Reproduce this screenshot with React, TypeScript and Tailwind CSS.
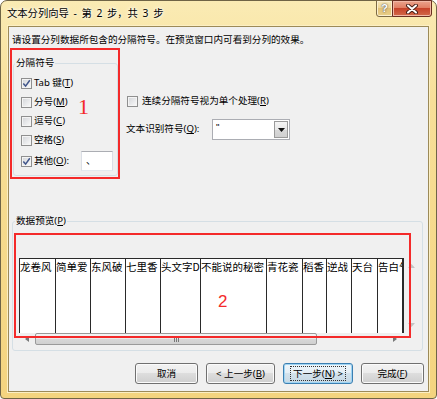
import React from 'react';

type Col = { t: string; w: string };

const cols: Col[] = [
  { t: '龙卷风', w: 'w-[36px]' },
  { t: '简单爱', w: 'w-[35px]' },
  { t: '东风破', w: 'w-[35px]' },
  { t: '七里香', w: 'w-[35px]' },
  { t: '头文字D', w: 'w-[40px]' },
  { t: '不能说的秘密', w: 'w-[66px]' },
  { t: '青花瓷', w: 'w-[36px]' },
  { t: '稻香', w: 'w-[24px]' },
  { t: '逆战', w: 'w-[25px]' },
  { t: '天台', w: 'w-[26px]' },
  { t: '告白气', w: 'w-[25px]' },
];

function Check({ checked }: { checked?: boolean }) {
  return (
    <span className="flex h-[11px] w-[11px] shrink-0 items-center justify-center border border-[#8f8f8f] bg-gradient-to-br from-[#d2d4d8] to-[#fbfbfb] shadow-[inset_0_0_0_1px_#f4f4f4]">
      {checked && (
        <svg width="9" height="9" viewBox="0 0 9 9">
          <path d="M1.3 4.6 L3.6 7.1 L7.8 1.3" fill="none" stroke="#40558a" strokeWidth="1.5" />
        </svg>
      )}
    </span>
  );
}

function Btn({ children, w, focused }: { children: React.ReactNode; w: string; focused?: boolean }) {
  return (
    <div
      className={
        w +
        (focused
          ? ' flex h-[21px] items-center justify-center rounded-[3px] border border-[#3c7fb1] bg-[linear-gradient(#eef6fb_0%,#e4eef5_50%,#d3e2ec_50%,#c6d8e4_100%)] shadow-[inset_0_0_0_1px_#9fd4f3]'
          : ' flex h-[21px] items-center justify-center rounded-[3px] border border-[#707070] bg-[linear-gradient(#f2f2f2_0%,#ebebeb_50%,#dddddd_50%,#cfcfcf_100%)] shadow-[inset_0_0_0_1px_#fbfbfb]')
      }
    >
      <span className={focused ? 'px-[2px] leading-[13px] outline-1 outline-dotted outline-[#333]' : 'leading-[13px]'}>
        {children}
      </span>
    </div>
  );
}

function U({ c }: { c: string }) {
  return <span className="underline underline-offset-[1px]">{c}</span>;
}

export default function App() {
  return (
    <div className="h-[399px] w-[437px] bg-white font-['Noto_Sans','Noto_Sans_CJK_SC',sans-serif] text-[9.6px] text-black">
      <div className="flex h-full w-full flex-col rounded-b-[4px] rounded-t-[7px] border border-[#6f6446] bg-[linear-gradient(180deg,#faebb4_0%,#f7df98_25%,#f4d47f_100%)] px-[7px] pb-[6px]">
        {/* title bar */}
        <div className="-mx-[7px] flex h-[25px] shrink-0 items-center pl-[6px] pr-[4px]">
          <span className="text-[10.3px] [word-spacing:2px] [text-shadow:0_0_5px_#fff,0_0_3px_#fff]">文本分列向导 - 第 2 步，共 3 步</span>
          <div className="-mt-px ml-auto flex self-start">
            <div className="flex h-[17px] w-[17px] items-center justify-center rounded-bl-[3px] border border-[#7d6b44] bg-[linear-gradient(#f6e6b8_0%,#eed592_50%,#e2c277_50%,#e9cf88_100%)] shadow-[inset_0_0_0_1px_#fbf0cf]">
              <span className="font-['Liberation_Sans',sans-serif] text-[11px] font-bold leading-none text-white [text-shadow:0_0_1px_#555,0_0_2px_#666]">?</span>
            </div>
            <div className="-ml-px flex h-[17px] w-[40px] items-center justify-center rounded-br-[3px] border border-[#6a2e20] bg-[linear-gradient(#eba48e_0%,#e07a5f_50%,#c7432a_50%,#d2694a_100%)] shadow-[inset_0_0_0_1px_#f1b8a6]">
              <svg width="12" height="10" viewBox="0 0 12 10">
                <path d="M2 1.5 L10 8.5 M10 1.5 L2 8.5" stroke="#4a2018" strokeWidth="4" strokeLinecap="round" />
                <path d="M2 1.5 L10 8.5 M10 1.5 L2 8.5" stroke="#ffffff" strokeWidth="2" strokeLinecap="round" />
              </svg>
            </div>
          </div>
        </div>

        {/* client area */}
        <div className="flex flex-1 flex-col border border-[#9c8a58] bg-[#f0f0f0] pt-[6px] shadow-[0_0_0_1px_#fcefc4]">
          <div className="ml-[3px] h-[14px] leading-[14px]">请设置分列数据所包含的分隔符号。在预览窗口内可看到分列的效果。</div>

          <div className="mt-[1px] flex">
            <div className="relative ml-[1px] w-[110px] border-2 border-[#f42a2a]">
              <fieldset className="mb-[1px] ml-[1px] mt-[6px] w-[105px] rounded-[3px] border border-[#d5dfe5] pb-[3px] pt-[4px]">
                <legend className="ml-[1px] px-[1px] leading-[14px]">分隔符号</legend>
                <div className="flex h-[19px] items-center gap-[2px] pl-[7px]">
                  <Check checked />
                  <span>Tab 键(<U c="T" />)</span>
                </div>
                <div className="flex h-[19px] items-center gap-[2px] pl-[7px]">
                  <Check />
                  <span>分号(<U c="M" />)</span>
                </div>
                <div className="flex h-[19px] items-center gap-[2px] pl-[7px]">
                  <Check />
                  <span>逗号(<U c="C" />)</span>
                </div>
                <div className="flex h-[19px] items-center gap-[2px] pl-[7px]">
                  <Check />
                  <span>空格(<U c="S" />)</span>
                </div>
                <div className="flex h-[22px] items-center gap-[2px] pl-[7px]">
                  <Check checked />
                  <span className="w-[45px]">其他(<U c="O" />):</span>
                  <div className="flex h-[20px] w-[32px] items-center border border-[#abadb3] border-l-[#dbdfe6] border-r-[#dbdfe6] border-b-[#e3e9ef] bg-white pl-[4px]">、</div>
                </div>
              </fieldset>
              <span className="absolute left-[66px] top-[46px] font-['Liberation_Serif',serif] text-[22px] leading-[22px] text-[#f42a2a]">1</span>
            </div>

            <div className="ml-[6px] flex flex-col pt-[47px]">
              <div className="flex h-[12px] items-center gap-[4px] pl-[1px]">
                <Check />
                <span>连续分隔符号视为单个处理(<U c="R" />)</span>
              </div>
              <div className="mt-[12px] flex h-[21px] items-center">
                <span className="w-[86px]">文本识别符号(<U c="Q" />):</span>
                <div className="flex h-[21px] w-[78px] border border-[#abadb3] bg-white p-[1px]">
                  <span className="pl-[2px] font-['Liberation_Sans',sans-serif] leading-[12px] text-black">"</span>
                  <div className="ml-auto flex h-full w-[14px] items-center justify-center border border-[#9a9a9a] bg-[linear-gradient(#f4f4f4_0%,#e8e8e8_50%,#d9d9d9_50%,#d0d0d0_100%)]">
                    <svg width="7" height="4" viewBox="0 0 7 4">
                      <path d="M0 0 L7 0 L3.5 4 Z" fill="#111" />
                    </svg>
                  </div>
                </div>
              </div>
            </div>
          </div>

          {/* preview */}
          <fieldset className="ml-[3px] mr-[5px] mt-[35px] rounded-[3px] border border-[#d5dfe5] pb-[5px] pt-[30px]">
            <legend className="ml-[2px] px-[1px] leading-[14px]">数据预览(<U c="P" />)</legend>
            <div className="relative ml-[6px] flex w-[400px] flex-col">
              <div className="flex h-[75px]">
                <div className="flex h-full w-[385px] overflow-hidden border-r-2 border-t border-[#2a2a2a] bg-white">
                  {cols.map((c) => (
                    <div
                      key={c.t}
                      className={c.w + " h-full shrink-0 overflow-hidden whitespace-nowrap border-l border-[#2a2a2a] pt-[2px] font-['Noto_Sans_CJK_SC',sans-serif] text-[10.5px] leading-[12px]"}
                    >
                      {c.t}
                    </div>
                  ))}
                </div>
                <div className="flex h-full w-[14px] flex-col items-center justify-between pb-[6px] pt-[6px]">
                  <svg width="7" height="4" viewBox="0 0 7 4">
                    <path d="M0 4 L7 4 L3.5 0 Z" fill="#c4c4c4" />
                  </svg>
                  <svg width="7" height="4" viewBox="0 0 7 4">
                    <path d="M0 0 L7 0 L3.5 4 Z" fill="#c4c4c4" />
                  </svg>
                </div>
              </div>
              <div className="flex h-[12px] w-[385px] items-center">
                <div className="flex w-[16px] items-center justify-center">
                  <svg width="4" height="6" viewBox="0 0 4 6">
                    <path d="M4 0 L4 6 L0 3 Z" fill="#777" />
                  </svg>
                </div>
                <div className="flex h-[12px] w-[282px] items-center justify-center rounded-[2px] border border-[#9a9a9a] bg-[linear-gradient(#f6f6f6_0%,#e8e8e8_50%,#d8d8d8_51%,#d0d0d0_100%)]">
                  <div className="flex gap-[1px]">
                    <span className="h-[5px] w-px bg-[#777]" />
                    <span className="h-[5px] w-px bg-[#777]" />
                    <span className="h-[5px] w-px bg-[#777]" />
                  </div>
                </div>
                <div className="flex flex-1 items-center justify-end pr-[7px]">
                  <svg width="4" height="6" viewBox="0 0 4 6">
                    <path d="M0 0 L0 6 L4 3 Z" fill="#777" />
                  </svg>
                </div>
              </div>
              <div className="pointer-events-none absolute left-[-5px] top-[-25px] h-[105px] w-[397px] border-2 border-[#f42a2a]" />
              <span className="absolute left-[199px] top-[35px] font-['Liberation_Sans',sans-serif] text-[17px] leading-[17px] text-[#f42a2a]">2</span>
            </div>
          </fieldset>

          <div className="mr-[4px] mt-[12px] flex justify-end gap-[8px]">
            <Btn w="w-[63px]">取消</Btn>
            <Btn w="w-[69px]">&lt; 上一步(<U c="B" />)</Btn>
            <Btn w="w-[70px]" focused>
              下一步(<U c="N" />) &gt;
            </Btn>
            <Btn w="w-[63px]">完成(<U c="F" />)</Btn>
          </div>
        </div>
      </div>
    </div>
  );
}
